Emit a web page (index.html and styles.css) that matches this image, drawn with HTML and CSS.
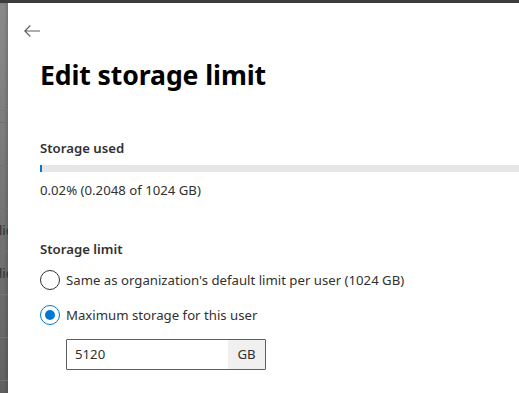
FILE: index.html
```html
<!DOCTYPE html>
<html lang="en">
<head>
<meta charset="utf-8">
<title>Edit storage limit</title>
<link rel="stylesheet" href="styles.css">
</head>
<body>
<div class="topbar"></div>
<div class="stage">
  <div class="backdrop">
    <div class="bd-head"></div>
    <div class="bd-row bd-small"></div>
    <div class="bd-row"></div>
    <div class="bd-row"></div>
    <div class="bd-row"><span class="bd-text">lic</span></div>
    <div class="bd-row"><span class="bd-text">lic</span></div>
    <div class="bd-row"></div>
    <div class="bd-row"></div>
    <div class="bd-row"></div>
  </div>
  <div class="panel">
    <div class="panel-head">
      <button class="back" aria-label="Back">
        <svg width="16" height="12" viewBox="0 0 16 12"><path d="M6.3 0.5 L0.8 6 L6.3 11.5 M0.8 6 H16" fill="none" stroke="#605e5c" stroke-width="1.1"/></svg>
      </button>
    </div>
    <div class="content">
      <h1 class="title">Edit storage limit</h1>
      <div class="label used-label">Storage used</div>
      <div class="bar"><div class="bar-fill" style="width:2px"></div></div>
      <div class="used-text">0.02% (0.2048 of 1024 GB)</div>
      <div class="label limit-label">Storage limit</div>
      <div class="radio-row first">
        <span class="radio"></span>
        <span class="radio-text">Same as organization's default limit per user (1024 GB)</span>
      </div>
      <div class="radio-row second">
        <span class="radio checked"></span>
        <span class="radio-text">Maximum storage for this user</span>
      </div>
      <div class="field">
        <span class="field-value">5120</span>
        <span class="field-suffix">GB</span>
      </div>
    </div>
  </div>
</div>
</body>
</html>
```
FILE: styles.css
```css
* { box-sizing: border-box; }
html, body { margin: 0; padding: 0; }
body {
  width: 519px;
  height: 393px;
  overflow: hidden;
  font-family: "Noto Sans", "Open Sans", sans-serif;
  color: #323130;
  background: #6e6e6e;
}
.topbar {
  height: 3px;
  background: #3d3d3d;
}
.stage {
  display: flex;
  height: 390px;
}
.backdrop {
  width: 8px;
  flex: none;
  overflow: hidden;
  background: linear-gradient(#8a8a8a, #626262);
  box-shadow: inset -2px 0 3px rgba(0,0,0,0.15);
}
.bd-head {
  height: 108px;
  border-bottom: 1px solid #767676;
}
.bd-row {
  height: 43px;
  border-bottom: 1px solid #707070;
  display: flex;
  align-items: center;
  white-space: nowrap;
}
.bd-small { height: 12px; }
.bd-text {
  font-size: 13px;
  color: #2e2e2e;
  margin-left: -1px;
}
.panel {
  flex: 1;
  background: #fff;
  overflow: hidden;
}
.panel-head {
  height: 50px;
  padding: 22px 0 0 16px;
}
.back {
  display: block;
  border: 0;
  background: none;
  padding: 0;
  width: 16px;
  height: 12px;
}
.back svg { display: block; }
.content {
  padding-left: 32px;
}
.title {
  margin: 4px 0 0 0;
  font-size: 26.6px;
  line-height: 36px;
  font-weight: 700;
  color: #000;
  letter-spacing: -0.1px;
}
.label {
  font-size: 13.2px;
  line-height: 20px;
  font-weight: 600;
  color: #323130;
}
.used-label { margin-top: 45px; }
.bar {
  margin-top: 7px;
  height: 7px;
  background: #e6e6e6;
  width: 600px;
}
.bar-fill {
  height: 100%;
  background: #0078d4;
}
.used-text {
  margin-top: 8px;
  font-size: 13.2px;
  line-height: 20px;
  color: #323130;
}
.limit-label { margin-top: 39px; }
.radio-row {
  display: flex;
  align-items: center;
  gap: 6px;
  height: 20px;
  font-size: 13.2px;
  white-space: nowrap;
}
.radio-row.first { margin-top: 11px; }
.radio-row.second { margin-top: 15px; }
.radio {
  width: 20px;
  height: 20px;
  border-radius: 50%;
  border: 1px solid #323130;
  flex: none;
  position: relative;
}
.radio.checked { border-color: #0078d4; }
.radio.checked::after {
  content: "";
  position: absolute;
  left: 4px;
  top: 4px;
  width: 10px;
  height: 10px;
  border-radius: 50%;
  background: #0078d4;
}
.field {
  margin: 14px 0 0 26px;
  width: 200px;
  height: 31px;
  border: 1px solid #605e5c;
  border-radius: 1px;
  display: flex;
  font-size: 13.2px;
}
.field-value {
  flex: 1;
  padding-left: 8px;
  line-height: 29px;
  color: #323130;
}
.field-suffix {
  width: 37px;
  background: #f0f0f0;
  text-align: center;
  line-height: 29px;
  color: #323130;
}
```
